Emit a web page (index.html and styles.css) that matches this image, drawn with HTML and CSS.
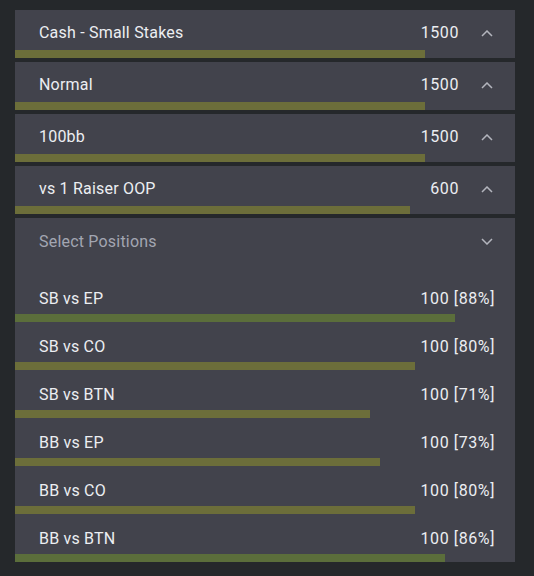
FILE: index.html
```html
<!DOCTYPE html>
<html lang="en">
<head>
<meta charset="utf-8">
<title>Range filters</title>
<link rel="stylesheet" href="styles.css">
</head>
<body>
<div class="stack">
  <div class="panel">
    <div class="head">
      <span class="label">Cash - Small Stakes</span>
      <span class="value">1500</span>
      <svg class="chev" viewBox="0 0 12 7"><path d="M1 6 L6 1 L11 6"/></svg>
    </div>
    <div class="bar olive" style="width: 82%"></div>
  </div>
  <div class="panel">
    <div class="head">
      <span class="label">Normal</span>
      <span class="value">1500</span>
      <svg class="chev" viewBox="0 0 12 7"><path d="M1 6 L6 1 L11 6"/></svg>
    </div>
    <div class="bar olive" style="width: 82%"></div>
  </div>
  <div class="panel">
    <div class="head">
      <span class="label">100bb</span>
      <span class="value">1500</span>
      <svg class="chev" viewBox="0 0 12 7"><path d="M1 6 L6 1 L11 6"/></svg>
    </div>
    <div class="bar olive" style="width: 82%"></div>
  </div>
  <div class="panel">
    <div class="head">
      <span class="label">vs 1 Raiser OOP</span>
      <span class="value">600</span>
      <svg class="chev" viewBox="0 0 12 7"><path d="M1 6 L6 1 L11 6"/></svg>
    </div>
    <div class="bar olive" style="width: 79%"></div>
  </div>

  <div class="panel positions">
    <div class="select">
      <span class="placeholder">Select Positions</span>
      <svg class="chev" viewBox="0 0 12 7"><path d="M1 1 L6 6 L11 1"/></svg>
    </div>
    <div class="row">
      <div class="line"><span class="label">SB vs EP</span><span class="stat">100 [88%]</span></div>
      <div class="bar green" style="width: 88%"></div>
    </div>
    <div class="row">
      <div class="line"><span class="label">SB vs CO</span><span class="stat">100 [80%]</span></div>
      <div class="bar olive" style="width: 80%"></div>
    </div>
    <div class="row">
      <div class="line"><span class="label">SB vs BTN</span><span class="stat">100 [71%]</span></div>
      <div class="bar olive" style="width: 71%"></div>
    </div>
    <div class="row">
      <div class="line"><span class="label">BB vs EP</span><span class="stat">100 [73%]</span></div>
      <div class="bar olive" style="width: 73%"></div>
    </div>
    <div class="row">
      <div class="line"><span class="label">BB vs CO</span><span class="stat">100 [80%]</span></div>
      <div class="bar olive" style="width: 80%"></div>
    </div>
    <div class="row">
      <div class="line"><span class="label">BB vs BTN</span><span class="stat">100 [86%]</span></div>
      <div class="bar green" style="width: 86%"></div>
    </div>
  </div>
</div>
</body>
</html>
```
FILE: styles.css
```css
html, body {
  margin: 0;
  padding: 0;
  background: #25282b;
}

body {
  font-family: Roboto, "Liberation Sans", sans-serif;
  font-size: 16px;
  letter-spacing: 0.2px;
  color: #eceef2;
  width: 534px;
  height: 576px;
  overflow: hidden;
}

.stack {
  display: flex;
  flex-direction: column;
  gap: 4px;
  padding: 10px 19px 0 15px;
}

.panel {
  background: #42434c;
  display: flex;
  flex-direction: column;
}

.head {
  height: 40px;
  box-sizing: border-box;
  padding: 6px 22px 0 24px;
  display: flex;
  align-items: center;
}

.label {
  flex: 1;
  line-height: 20px;
}

.value,
.stat {
  line-height: 20px;
  letter-spacing: 0.6px;
}

.chev {
  width: 12px;
  height: 7px;
  margin-left: 22px;
  fill: none;
  stroke: #b3b5bd;
  stroke-width: 1.5;
}

.bar {
  height: 8px;
}

.olive {
  background: #6c6e3a;
}

.green {
  background: #5b6e3b;
}

.select {
  height: 56px;
  box-sizing: border-box;
  padding: 0 22px 9px 24px;
  display: flex;
  align-items: center;
}

.placeholder {
  flex: 1;
  color: #a2a6b2;
}

.row {
  display: flex;
  flex-direction: column;
}

.line {
  height: 40px;
  box-sizing: border-box;
  padding: 9px 20px 0 24px;
  display: flex;
  align-items: center;
}
```
